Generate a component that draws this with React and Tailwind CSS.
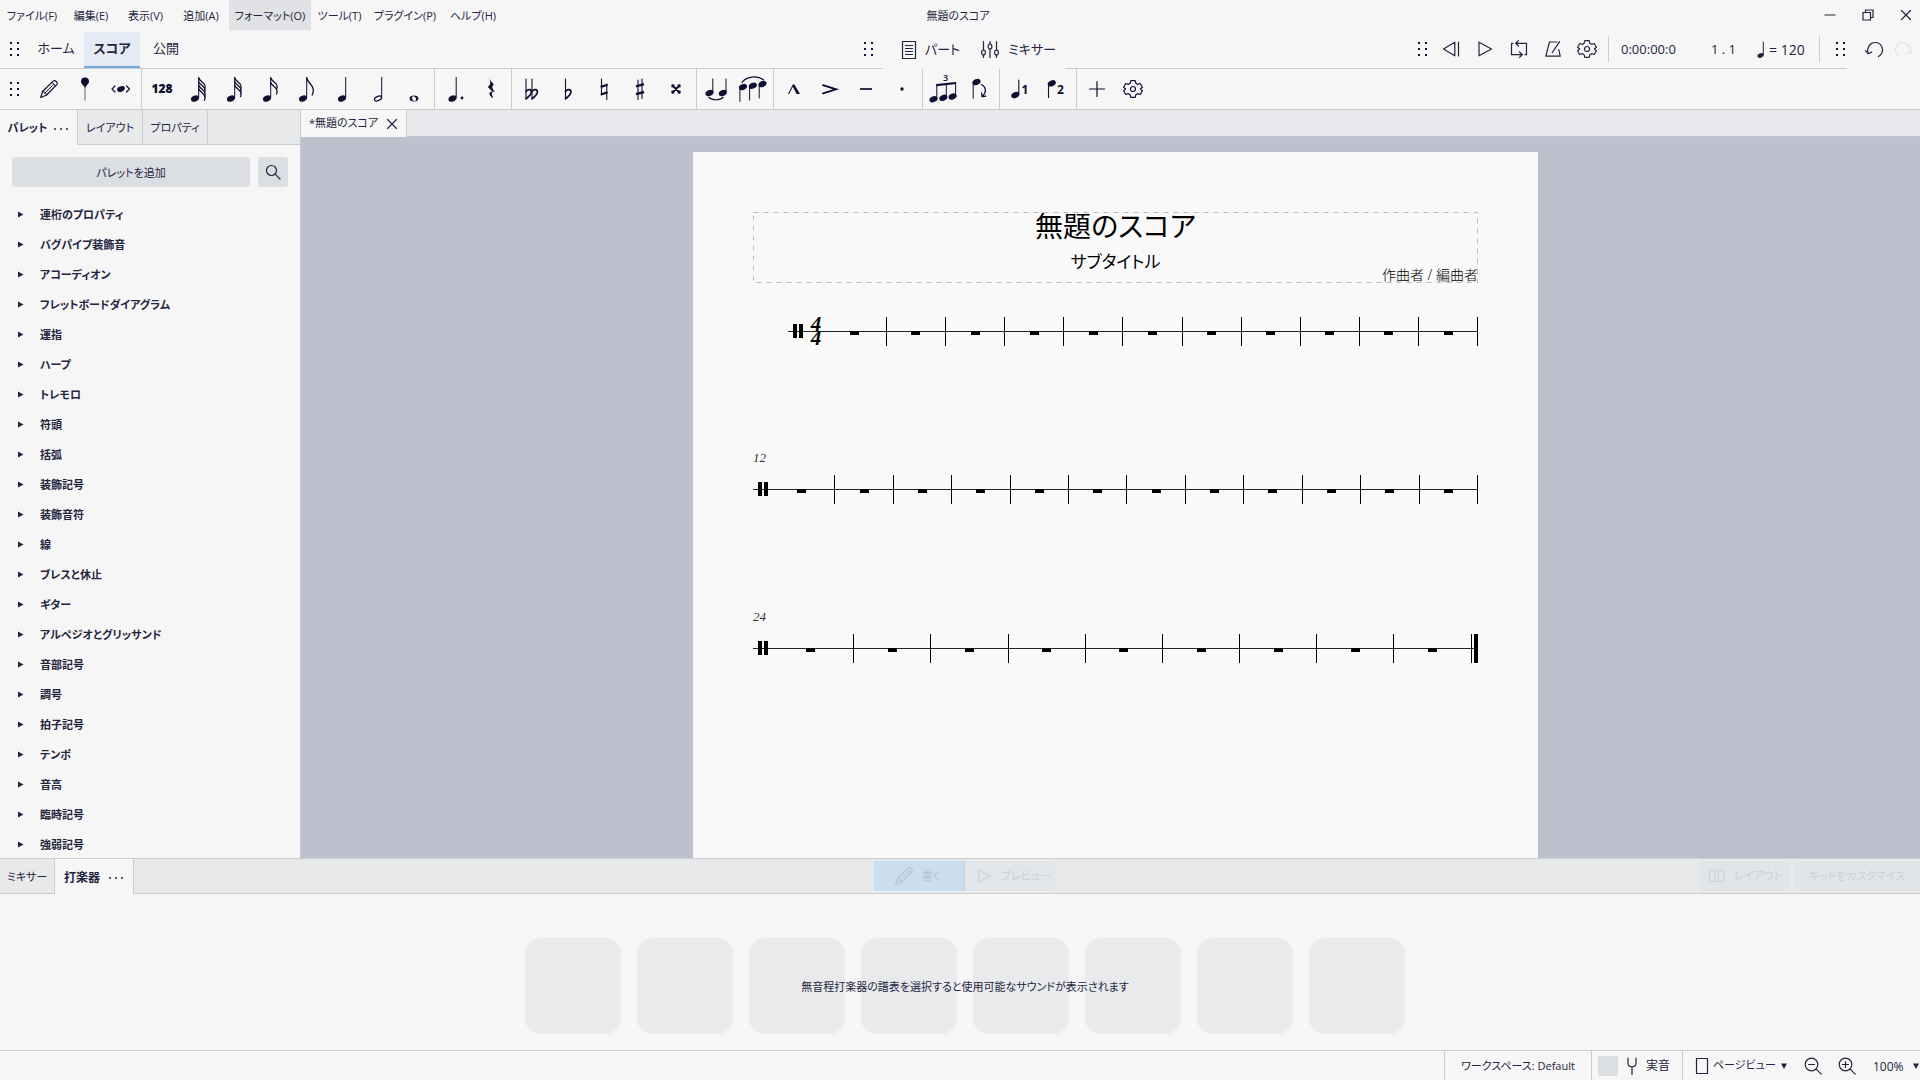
import React, { useState } from "react";

const menus = [
  { label: "ファイル(F)", width: "w-16" },
  { label: "編集(E)", width: "w-[54px]" },
  { label: "表示(V)", width: "w-[55px]" },
  { label: "追加(A)", width: "w-14" },
  { label: "フォーマット(O)", width: "w-[82px]" },
  { label: "ツール(T)", width: "w-[57px]" },
  { label: "プラグイン(P)", width: "w-[74px]" },
  { label: "ヘルプ(H)", width: "w-[62px]" },
];

const palettes = [
  "連桁のプロパティ",
  "バグパイプ装飾音",
  "アコーディオン",
  "フレットボードダイアグラム",
  "運指",
  "ハープ",
  "トレモロ",
  "符頭",
  "括弧",
  "装飾記号",
  "装飾音符",
  "線",
  "ブレスと休止",
  "ギター",
  "アルペジオとグリッサンド",
  "音部記号",
  "調号",
  "拍子記号",
  "テンポ",
  "音高",
  "臨時記号",
  "強弱記号",
];

// x positions are relative to the left edge of the title frame
const systems = [
  {
    y: 49,
    start: 35,
    clef: 40,
    time: 63,
    bars: [133, 192, 251, 310, 369, 429, 488, 547, 606, 665, 724],
    rests: [101, 162, 222, 281, 340, 399, 458, 517, 576, 635, 695],
  },
  {
    y: 207,
    start: 0,
    clef: 5,
    number: "12",
    bars: [81, 140, 198, 257, 315, 373, 432, 490, 549, 607, 666, 724],
    rests: [48, 111, 169, 227, 286, 344, 403, 461, 519, 578, 636, 695],
  },
  {
    y: 366,
    start: 0,
    clef: 5,
    number: "24",
    final: true,
    bars: [100, 177, 255, 332, 409, 486, 563, 640],
    rests: [57, 139, 216, 293, 370, 448, 525, 602, 679],
  },
];

function Svg({ w = 36, h = 40, children, className = "" }) {
  return (
    <svg
      width={w}
      height={h}
      viewBox={`0 0 ${w} ${h}`}
      fill="none"
      stroke="currentColor"
      strokeWidth="1.2"
      strokeLinecap="round"
      strokeLinejoin="round"
      className={`shrink-0 ${className}`}
      aria-hidden="true"
    >
      {children}
    </svg>
  );
}

function Handle() {
  return (
    <Svg w={10} h={16} className="text-[#15153a]">
      <g fill="currentColor" stroke="none">
        {[1, 7, 13].map((y) => (
          <React.Fragment key={y}>
            <rect x="0" y={y} width="2" height="2" />
            <rect x="7" y={y} width="2" height="2" />
          </React.Fragment>
        ))}
      </g>
    </Svg>
  );
}

function Head({ x, y, open }) {
  return (
    <ellipse
      cx={x}
      cy={y}
      rx={open ? 3.8 : 4.2}
      ry={open ? 2.1 : 2.9}
      transform={`rotate(-24 ${x} ${y})`}
      fill={open ? "none" : "currentColor"}
      stroke={open ? "currentColor" : "none"}
    />
  );
}

function Note({ x = 18, flags = 0, open, dot }) {
  const stem = x + 3.7;
  const step = flags > 2 ? 3.6 : 4.5;
  return (
    <Svg>
      <Head x={x} y={29.5} open={open} />
      <path d={`M${stem} 8V28.5`} strokeWidth="1" strokeLinecap="butt" />
      {Array.from({ length: flags }, (_, i) => (
        <path
          key={i}
          d={
            flags === 1
              ? `M${stem} 9c1 5 7 7 6.600 12.500c0 1.500-.4 3-1.200 4.500`
              : `M${stem} ${9 + i * step}c1 3.500 6.400 4.500 6.400 8.500c0 1.200-.2 2-.6 3`
          }
          strokeWidth="1.3"
        />
      ))}
      {dot && <circle cx={x + 9.5} cy="29" r="1.4" fill="currentColor" stroke="none" />}
    </Svg>
  );
}

function Flat({ x }) {
  return (
    <>
      <path d={`M${x} 10V30`} strokeWidth="1.1" />
      <path d={`M${x} 22.5c2-2.6 5.6-2.4 5.4.6c-.2 2.6-3 4.8-5.4 6.6`} strokeWidth="1.7" />
    </>
  );
}

function Gear({ w = 36, h = 40 }) {
  return (
    <Svg w={w} h={h}>
      <g transform={`translate(${w / 2} ${h / 2})`}>
        <path d="M-2.2-8.4h4.4l.7 2.7 1.700 1 2.700-.8 2.100 3.700-2 1.800 2 1.800-2.100 3.700-2.700-.8-1.700 1-.7 2.700h-4.400l-.7-2.700-1.700-1-2.700.8-2.100-3.700 2-1.800-2-1.800 2.100-3.700 2.700.8 1.700-1z" />
        <circle r="2.5" />
      </g>
    </Svg>
  );
}

function Pencil({ className }) {
  return (
    <Svg className={className}>
      <path d="M9.700 28.500l2-6.200 10.800-10.400c1.400-1.300 4.800 1.800 3.500 3.400L15.600 26z" />
      <path d="M11.900 22.600c1.800.2 3.400 1.600 3.600 3.300M20.600 13.600c1.700.4 3.100 1.700 3.600 3.400M13.600 24.400l8.800-8.700" strokeWidth="1" />
    </Svg>
  );
}

const noteGroups = [
  [
    { name: "音符入力", icon: <Pencil /> },
    {
      name: "入力位置",
      icon: (
        <Svg>
          <path d="M18 14V31" stroke="#8b8ba0" strokeWidth="1.4" />
          <path d="M18 19c-1-3-4-3.800-4-6.600a4 4 0 0 1 8 0c0 2.800-3 3.600-4 6.600z" fill="currentColor" stroke="none" />
        </Svg>
      ),
    },
    {
      name: "音高の変更",
      icon: (
        <Svg>
          <path d="M12 17l-3 3 3 3M23.500 17l3 3-3 3" />
          <ellipse cx="18" cy="20" rx="4" ry="2.600" transform="rotate(-24 18 20)" fill="currentColor" stroke="none" />
        </Svg>
      ),
    },
  ],
  [
    { name: "128分音符", icon: <span className="text-xs font-extrabold">128</span> },
    { name: "64分音符", icon: <Note x={15} flags={4} /> },
    { name: "32分音符", icon: <Note x={15} flags={3} /> },
    { name: "16分音符", icon: <Note x={15} flags={2} /> },
    { name: "8分音符", icon: <Note x={15} flags={1} /> },
    { name: "4分音符", icon: <Note /> },
    { name: "2分音符", icon: <Note open /> },
    {
      name: "全音符",
      icon: (
        <Svg>
          <path
            d="M18 26.600c2.600 0 4.400 1.200 4.400 3s-1.800 3-4.400 3-4.400-1.200-4.400-3 1.800-3 4.400-3zm-.8.700c-1.400.2-1.500 1.400-1 2.600.5 1.300 1.400 2.200 2.600 2 1.300-.2 1.500-1.400 1-2.600-.5-1.300-1.400-2.200-2.600-2z"
            fill="currentColor"
            fillRule="evenodd"
            stroke="none"
          />
        </Svg>
      ),
    },
  ],
  [
    { name: "付点", icon: <Note x={15.5} dot /> },
    {
      name: "休符",
      icon: (
        <Svg>
          <path
            d="M16.200 10l4.600 5.600c-2 2-2.200 3.400 1 7.400-2.800-1-4.200 1.200-1.600 5.600-.4.600-.6.600-1 .2-3.800-3.200-3.400-6 .2-6.200l-4.600-4.600c2.800-2.400 3.200-4.600 1.400-8z"
            fill="currentColor"
            stroke="none"
          />
        </Svg>
      ),
    },
  ],
  [
    {
      name: "ダブルフラット",
      icon: (
        <Svg>
          <Flat x={12} />
          <Flat x={18} />
        </Svg>
      ),
    },
    {
      name: "フラット",
      icon: (
        <Svg>
          <Flat x={15.5} />
        </Svg>
      ),
    },
    {
      name: "ナチュラル",
      icon: (
        <Svg>
          <path d="M15.500 10V26M20.800 15V30.500" strokeWidth="1.100" />
          <path d="M15.500 17.600l5.300-1.600M15.500 25.200l5.300-1.600" strokeWidth="2.200" />
        </Svg>
      ),
    },
    {
      name: "シャープ",
      icon: (
        <Svg>
          <path d="M16 11V30.500M20 10V29.500" strokeWidth="1.100" />
          <path d="M14 17.400l8-2.200M14 25.200l8-2.200" strokeWidth="2.400" strokeLinecap="butt" />
        </Svg>
      ),
    },
    {
      name: "ダブルシャープ",
      icon: (
        <Svg>
          <path d="M14.500 16.500l7 7M21.500 16.500l-7 7" strokeWidth="1.800" />
          <path d="M13.500 15.500h3l-.6 2.400-2.400.6zM22.500 15.500v3l-2.400-.6-.6-2.400zM13.500 24.500v-3l2.400.6.6 2.400zM22.500 24.500h-3l.6-2.400 2.400-.6z" fill="currentColor" stroke="none" />
        </Svg>
      ),
    },
  ],
  [
    {
      name: "タイ",
      icon: (
        <Svg>
          <g transform="translate(0 -5.500)">
            <Head x={10.500} y={29.500} />
            <Head x={23.800} y={29.500} />
          </g>
          <path d="M13.800 10V23.500M27 10V23.500" strokeWidth="1" />
          <path d="M10 28.500c3 3 11 3 14 0" />
        </Svg>
      ),
    },
    {
      name: "スラー",
      icon: (
        <Svg>
          <Head x={8} y={18} />
          <Head x={17.800} y={16.700} />
          <Head x={27.500} y={15} />
          <path d="M4.900 19V32.500M14.600 18V31M24.200 16.500V29" strokeWidth="1" />
          <path d="M7 13.500C11 7.500 22 6 28.500 10.800" />
        </Svg>
      ),
    },
  ],
  [
    {
      name: "マルカート",
      icon: (
        <Svg>
          <path d="M12 25L16.800 15.500h1.600L24 25h-3.400l-3.800-7.200L13.200 25z" fill="currentColor" stroke="none" />
        </Svg>
      ),
    },
    {
      name: "アクセント",
      icon: (
        <Svg>
          <path d="M11 16.200L24 20.300 11 24.400" strokeWidth="1.900" strokeLinejoin="miter" />
        </Svg>
      ),
    },
    {
      name: "テヌート",
      icon: (
        <Svg>
          <path d="M12 20H24" strokeWidth="1.700" strokeLinecap="butt" />
        </Svg>
      ),
    },
    {
      name: "スタッカート",
      icon: (
        <Svg>
          <circle cx="18" cy="20" r="1.700" fill="currentColor" stroke="none" />
        </Svg>
      ),
    },
  ],
  [
    {
      name: "連符",
      icon: (
        <Svg>
          <Head x={8.500} y={30.200} />
          <Head x={18.300} y={28.800} />
          <Head x={27.600} y={27.500} />
          <path d="M11.800 16V29.500M21.300 15V28M30.600 14V27" strokeWidth="1" />
          <path d="M11.300 16.200L31 14" strokeWidth="2.200" strokeLinecap="butt" />
          <text x="20.500" y="12" textAnchor="middle" fontSize="9" fontWeight="600" fill="currentColor" stroke="none">
            3
          </text>
        </Svg>
      ),
    },
    {
      name: "向きを反転",
      icon: (
        <Svg>
          <Head x={15.500} y={13} />
          <path d="M12.200 13.500V29.300" strokeWidth="1" />
          <path d="M20.500 15.500c4.500 2.500 5.600 7.500 1 11.700M20.600 23.800l.4 3.900 3.900-.6" />
        </Svg>
      ),
    },
  ],
  [
    {
      name: "声部 1",
      icon: (
        <Svg>
          <Head x={13.300} y={26} />
          <path d="M16.800 11V25" strokeWidth="1.100" />
          <text x="19.500" y="24.500" fontSize="12" fontWeight="700" fill="currentColor" stroke="none">
            1
          </text>
        </Svg>
      ),
    },
    {
      name: "声部 2",
      icon: (
        <Svg>
          <Head x={13.800} y={14.300} />
          <path d="M10.500 15V28.500" strokeWidth="1.100" />
          <text x="19" y="24.500" fontSize="12" fontWeight="700" fill="currentColor" stroke="none">
            2
          </text>
        </Svg>
      ),
    },
  ],
  [
    {
      name: "追加",
      icon: (
        <Svg>
          <path d="M10.500 20H25.500M18 12.500V27.500" />
        </Svg>
      ),
    },
    { name: "設定", icon: <Gear /> },
  ],
];

const transport = [
  {
    name: "巻き戻し",
    icon: (
      <Svg w={20} h={20}>
        <path d="M13.800 3.200V16.800L2.500 10zM17.500 3V17" />
      </Svg>
    ),
  },
  {
    name: "再生",
    icon: (
      <Svg w={20} h={20}>
        <path d="M4 3.200V16.800L16.500 10z" />
      </Svg>
    ),
  },
  {
    name: "ループ再生",
    icon: (
      <Svg w={20} h={20}>
        <path d="M4 4.300H2.500V15.700H13M10.500 13l2.800 2.700-2.800 2.700M16 15.700h1.500V4.300H7M9.500 1.600L6.700 4.300l2.800 2.700" />
      </Svg>
    ),
  },
  {
    name: "メトロノーム",
    icon: (
      <Svg w={20} h={20}>
        <path d="M14 3H6.500L2.800 17.200H17.200L15.800 10.500M9.300 13.500L16.600 2.600" />
      </Svg>
    ),
  },
  { name: "再生設定", icon: <Gear w={20} h={20} /> },
];

function MenuBar() {
  return (
    <header className="flex h-[30px] shrink-0 items-stretch">
      <nav className="flex flex-1">
        {menus.map((menu) => (
          <button
            key={menu.label}
            type="button"
            className={`${menu.width} whitespace-nowrap pt-0.5 text-center ${
              menu.label === "フォーマット(O)" ? "bg-[#e0e2e5]" : ""
            }`}
          >
            {menu.label}
          </button>
        ))}
      </nav>
      <h1 className="flex items-center pt-0.5">無題のスコア</h1>
      <div className="flex flex-1 items-center justify-end gap-[18px] pr-1">
        <button type="button" aria-label="最小化">
          <Svg w={20} h={20}>
            <path d="M5 10H15" />
          </Svg>
        </button>
        <button type="button" aria-label="元に戻す (縮小)">
          <Svg w={20} h={20}>
            <path d="M5 7.500h7.500V15H5zM7.500 7.500V5H15v7.500h-2.500" strokeLinejoin="miter" />
          </Svg>
        </button>
        <button type="button" aria-label="閉じる">
          <Svg w={20} h={20}>
            <path d="M5.500 5.500l9 9M14.500 5.500l-9 9" />
          </Svg>
        </button>
      </div>
    </header>
  );
}

function NavBar() {
  return (
    <div className="flex h-[39px] shrink-0 text-[13px]">
      <div className="flex grow-[864] basis-0 items-center border-b border-[#c9cdd0] pl-[10px] pr-[9px]">
        <Handle />
        <button type="button" className="ml-2 h-full w-14">
          ホーム
        </button>
        <button
          type="button"
          className="h-9 w-14 self-end border-b-2 border-[#72a9d8] bg-[#e4ebf4] font-bold"
        >
          スコア
        </button>
        <button type="button" className="h-full w-[52px]">
          公開
        </button>
        <div className="ml-auto">
          <Handle />
        </div>
      </div>
      <div className="flex w-[182px] items-center gap-5 whitespace-nowrap pl-[18px]">
        <button type="button" className="flex items-center gap-2">
          <Svg w={16} h={20}>
            <path d="M1.500 1.500h13v17h-13zM4.500 5.500h7M4.500 8.500h7M4.500 11.500h7M4.500 14.500h7" />
          </Svg>
          パート
        </button>
        <button type="button" className="flex items-center gap-2">
          <Svg w={20} h={20}>
            <path d="M3.500 1.500V10M3.500 15V17.500M10 1.500V4M10 9V17.500M16.500 1.500V10M16.500 15V17.500" />
            <ellipse cx="3.500" cy="12.500" rx="1.900" ry="2.500" />
            <ellipse cx="10" cy="6.500" rx="1.900" ry="2.500" />
            <ellipse cx="16.500" cy="12.500" rx="1.900" ry="2.500" />
          </Svg>
          ミキサー
        </button>
      </div>
      <div className="flex grow-[781] basis-0 items-center justify-end border-b border-[#c9cdd0] pr-px">
        <Handle />
        <div className="ml-[13px] flex gap-[14px]">
          {transport.map((item) => (
            <button key={item.name} type="button" aria-label={item.name}>
              {item.icon}
            </button>
          ))}
        </div>
        <div className="ml-[11px] h-[26px] w-px bg-[#c9cdd0]" />
        <span className="ml-3 w-[58px] whitespace-nowrap pt-0.5">0:00:00:0</span>
        <span className="ml-8 w-6 whitespace-nowrap pt-0.5">1 . 1</span>
        <span className="ml-[22px] flex w-[52px] items-center gap-1 whitespace-nowrap pt-0.5 text-sm">
          <Svg w={8} h={18}>
            <ellipse cx="3.500" cy="14.500" rx="3.200" ry="2.300" transform="rotate(-24 3.500 14.500)" fill="currentColor" stroke="none" />
            <path d="M6.300 1V14" strokeWidth="1" />
          </Svg>
          = 120
        </span>
        <div className="ml-[10px] h-[26px] w-px bg-[#c9cdd0]" />
        <div className="ml-4">
          <Handle />
        </div>
      </div>
      <div className="flex w-[73px] items-center gap-[10px] pl-[17px]">
        <button type="button" aria-label="元に戻す">
          <Svg w={20} h={20}>
            <path d="M4 13.200C2.500 7 6.500 2.500 11 2.500a7.300 7.300 0 0 1 5 12.800L14.500 16.500M1.500 10.500l2.500 3.200 3.600-1.600" />
          </Svg>
        </button>
        <button type="button" aria-label="やり直し" className="text-[#e0e3e5]">
          <Svg w={20} h={20}>
            <path d="M16 13.200C17.500 7 13.500 2.500 9 2.500a7.300 7.300 0 0 0-5 12.800L5.500 16.500M18.500 10.500l-2.500 3.200-3.600-1.600" />
          </Svg>
        </button>
      </div>
    </div>
  );
}

function NoteToolbar() {
  return (
    <div className="flex h-[41px] shrink-0 border-b border-[#c9cdd0] text-[#0e0e30]">
      <div className="flex w-[29px] items-center pl-[10px]">
        <Handle />
      </div>
      {noteGroups.map((group, i) => (
        <div
          key={i}
          className={`flex px-0.5 ${i < noteGroups.length - 1 ? "border-r border-[#c9cdd0]" : ""}`}
        >
          {group.map((item) => (
            <button
              key={item.name}
              type="button"
              aria-label={item.name}
              className="flex w-9 items-center justify-center"
            >
              {item.icon}
            </button>
          ))}
        </div>
      ))}
    </div>
  );
}

function Dots() {
  return (
    <Svg w={16} h={4}>
      <g fill="currentColor" stroke="none">
        <circle cx="2" cy="2" r="1" />
        <circle cx="8" cy="2" r="1" />
        <circle cx="14" cy="2" r="1" />
      </g>
    </Svg>
  );
}

function Sidebar() {
  return (
    <aside className="flex w-[301px] shrink-0 flex-col overflow-hidden border-r border-[#c9cdd0]">
      <div className="flex h-[35px] shrink-0 whitespace-nowrap bg-[#e7e9eb]">
        <button
          type="button"
          className="flex w-[78px] items-center justify-center gap-1.5 border-r border-[#c9cdd0] bg-[#f6f6f6] pt-0.5 font-bold"
        >
          パレット
          <Dots />
        </button>
        <button type="button" className="w-[65px] border-b border-r border-[#c9cdd0] pt-0.5">
          レイアウト
        </button>
        <button type="button" className="w-[65px] border-b border-r border-[#c9cdd0] pt-0.5">
          プロパティ
        </button>
        <div className="flex-1 border-b border-[#c9cdd0]" />
      </div>
      <div className="flex shrink-0 gap-2 px-3 py-3">
        <button type="button" className="h-[30px] flex-1 rounded-[3px] bg-[#dbdfe3] pt-0.5">
          パレットを追加
        </button>
        <button
          type="button"
          aria-label="パレットを検索"
          className="flex h-[30px] w-[30px] items-center justify-center rounded-[3px] bg-[#dbdfe3]"
        >
          <Svg w={18} h={18}>
            <circle cx="7.500" cy="7.500" r="5" />
            <path d="M11.200 11.200l4.800 4.800" />
          </Svg>
        </button>
      </div>
      <ul className="min-h-0 flex-1 overflow-hidden">
        {palettes.map((name) => (
          <li key={name} className="h-[30px]">
            <button type="button" className="flex h-full w-full items-center gap-4 pl-[18px] pt-0.5 font-bold">
              <Svg w={6} h={8}>
                <path d="M0 .5v6L5.500 3.500z" fill="currentColor" stroke="none" />
              </Svg>
              {name}
            </button>
          </li>
        ))}
      </ul>
    </aside>
  );
}

function System({ system }) {
  const { y, start, clef, time, number, bars, rests } = system;
  return (
    <g fill="#000">
      {number && (
        <text x="0" y={y - 28} fontSize="13" fontStyle="italic" fill="#333" className="font-['Liberation_Serif',serif]">
          {number}
        </text>
      )}
      <rect x={start} y={y - 1} width={725 - start} height="1" fill="#222" />
      <rect x={clef} y={y - 8} width="4" height="14" />
      <rect x={clef + 6} y={y - 8} width="4" height="14" />
      {time && (
        <text
          y={y - 1}
          fontSize="21"
          fontWeight="700"
          fontStyle="italic"
          textAnchor="middle"
          className="font-['Liberation_Serif',serif]"
        >
          <tspan x={time}>4</tspan>
          <tspan x={time} dy="14">
            4
          </tspan>
        </text>
      )}
      {bars.map((x) => (
        <rect key={x} x={x} y={y - 15} width="1" height="29" />
      ))}
      {rests.map((x) => (
        <rect key={x} x={x - 4} y={y - 1} width="9" height="4" />
      ))}
      {system.final && (
        <>
          <rect x="718" y={y - 15} width="1" height="29" />
          <rect x="721" y={y - 15} width="4" height="29" />
        </>
      )}
    </g>
  );
}

function ScoreArea() {
  return (
    <main className="flex min-w-0 flex-1 flex-col">
      <div className="flex h-[27px] shrink-0 bg-[#e6e8eb]">
        <div className="flex w-[106px] items-center justify-center gap-2 whitespace-nowrap border-r border-[#c9cdd0] bg-[#f6f6f6]">
          <span>*無題のスコア</span>
          <button type="button" aria-label="スコアを閉じる">
            <Svg w={12} h={12}>
              <path d="M1.500 1.500l9 9M10.500 1.500l-9 9" />
            </Svg>
          </button>
        </div>
        <div className="flex-1 border-b border-[#c0c5cc]" />
      </div>
      <div className="flex min-h-0 flex-1 justify-center overflow-hidden bg-[#bdc1ce] pl-[10px] pt-[15px] text-black">
        <article className="min-h-[1200px] w-[845px] shrink-0 bg-[#f9f9f9] px-[60px] pt-[60px]">
          <div className="relative flex h-[71px] flex-col items-center">
            <svg className="absolute inset-0 h-full w-full" aria-hidden="true">
              <rect x="0.500" y="0.500" width="724" height="70" fill="none" stroke="#bdbdbd" strokeDasharray="5 5" />
            </svg>
            <h2 className="text-[28px] leading-7">無題のスコア</h2>
            <h3 className="mt-[10px] text-[17px] leading-6">サブタイトル</h3>
            <p className="absolute -bottom-0.5 right-0 text-sm font-light">作曲者 / 編曲者</p>
          </div>
          <svg width="725" height="420" viewBox="0 0 725 420" role="img" aria-label="楽譜" shapeRendering="crispEdges">
            {systems.map((system) => (
              <System key={system.y} system={system} />
            ))}
          </svg>
        </article>
      </div>
    </main>
  );
}

function PercussionPanel() {
  return (
    <section className="flex h-[192px] shrink-0 flex-col border-t border-[#c9cdd0]">
      <div className="flex h-[35px] shrink-0 whitespace-nowrap bg-[#e7e9eb]">
        <button type="button" className="w-[55px] border-b border-r border-[#c9cdd0] pt-0.5">
          ミキサー
        </button>
        <button
          type="button"
          className="flex w-[79px] items-center justify-center gap-2 border-r border-[#c9cdd0] bg-[#f6f6f6] pt-0.5 text-xs font-bold"
        >
          打楽器
          <Dots />
        </button>
        <div className="flex flex-1 items-center border-b border-[#c9cdd0] text-[#cbd1d6]">
          <div className="flex flex-1 justify-end">
            <button
              type="button"
              disabled
              className="flex h-[30px] w-[91px] items-center justify-center gap-1 rounded-l-[3px] border-r border-[#c3ccd2] bg-[#cbdeed] pr-3 text-[#b4c6d4]"
            >
              <Pencil className="-mr-1" />
              書く
            </button>
          </div>
          <div className="flex w-[955px] justify-between">
            <button
              type="button"
              disabled
              className="flex h-[30px] w-[91px] items-center gap-2 rounded-r-[3px] bg-[#e3e6e9] pl-[10px]"
            >
              <Svg w={18} h={20}>
                <path d="M4 4V16L15 10z" />
              </Svg>
              プレビュー
            </button>
            <div className="flex gap-1">
              <button
                type="button"
                disabled
                className="flex h-[30px] w-[90px] items-center justify-center gap-2 rounded-[3px] bg-[#e1e5e8]"
              >
                <Svg w={18} h={14}>
                  <path d="M1.500 1.500h5.500v11H1.500zM10.500 1.500H16v11h-5.500z" />
                </Svg>
                レイアウト
              </button>
              <button type="button" disabled className="h-[30px] w-[126px] rounded-l-[3px] bg-[#e1e5e8]">
                キットをカスタマイズ
              </button>
            </div>
          </div>
        </div>
      </div>
      <div className="relative flex flex-1 justify-center gap-4 pl-[10px] pt-11">
        {Array.from({ length: 8 }, (_, i) => (
          <div key={i} className="h-24 w-24 rounded-2xl bg-[#e8eaec]" />
        ))}
        <p className="absolute inset-x-0 top-[83px] pl-[10px] text-center leading-5">
          無音程打楽器の譜表を選択すると使用可能なサウンドが表示されます
        </p>
      </div>
    </section>
  );
}

function Caret() {
  return (
    <Svg w={6} h={6}>
      <path d="M0 .5h6L3 6z" fill="currentColor" stroke="none" />
    </Svg>
  );
}

function StatusBar() {
  const [concertPitch, setConcertPitch] = useState(false);

  return (
    <footer className="flex h-[30px] shrink-0 justify-end overflow-hidden whitespace-nowrap border-t border-[#c9cdd0]">
      <button type="button" className="w-[148px] border-x border-[#c9cdd0] pt-0.5">
        ワークスペース: Default
      </button>
      <label className="flex w-[91px] items-center border-r border-[#c9cdd0] pl-[6px] text-xs">
        <input
          type="checkbox"
          checked={concertPitch}
          onChange={(e) => setConcertPitch(e.target.checked)}
          className="h-5 w-5 appearance-none bg-[#dbdfe1] checked:bg-[#72a9d8]"
        />
        <Svg w={12} h={20} className="mx-2">
          <path d="M2 2V7c0 5 8 5 8 0V2M6 11V18.500" />
        </Svg>
        実音
      </label>
      <div className="flex w-[237px] items-center pl-3">
        <Svg w={14} h={18}>
          <path d="M1.500 1.500h11v15h-11z" />
        </Svg>
        <label className="ml-1 flex items-center">
          <select aria-label="表示モード" className="w-17 appearance-none" defaultValue="page">
            <option value="page">ページビュー</option>
          </select>
          <Caret />
        </label>
        <button type="button" aria-label="縮小" className="ml-4">
          <Svg w={20} h={20}>
            <circle cx="8.500" cy="8.500" r="6.300" />
            <path d="M13.200 13.200l5 5M5.500 8.500h6" />
          </Svg>
        </button>
        <button type="button" aria-label="拡大" className="ml-[14px]">
          <Svg w={20} h={20}>
            <circle cx="8.500" cy="8.500" r="6.300" />
            <path d="M13.200 13.200l5 5M5.500 8.500h6M8.500 5.500v6" />
          </Svg>
        </button>
        <label className="ml-4 flex items-center">
          <select aria-label="ズーム" className="w-10 appearance-none pt-0.5 text-xs" defaultValue="100">
            <option value="100">100%</option>
          </select>
          <Caret />
        </label>
      </div>
    </footer>
  );
}

function App() {
  return (
    <div
      lang="ja"
      className="flex h-screen flex-col overflow-hidden bg-[#f6f6f6] font-['Open_Sans','Noto_Sans_CJK_JP',sans-serif] text-[11px] text-[#24243f] [font-feature-settings:'palt']"
    >
      <MenuBar />
      <NavBar />
      <NoteToolbar />
      <div className="flex min-h-0 flex-1">
        <Sidebar />
        <ScoreArea />
      </div>
      <PercussionPanel />
      <StatusBar />
    </div>
  );
}

export default App;
